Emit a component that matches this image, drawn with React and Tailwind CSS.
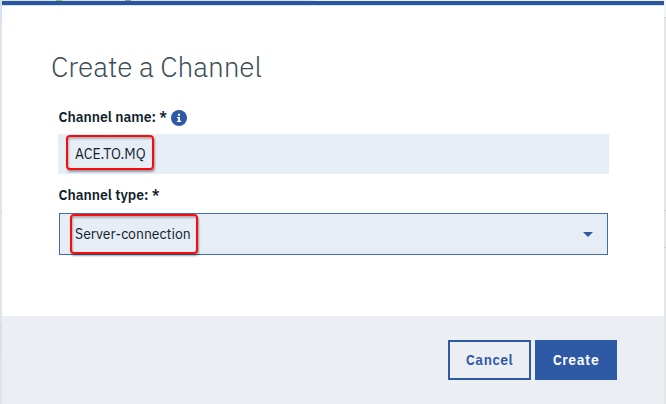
import React from "react";

function Highlight({ className }) {
  return (
    <span
      className={`absolute rounded-[4px] border-2 border-[#f90a0c] shadow-[1px_2px_2px_rgba(0,0,0,0.35),inset_1px_2px_2px_rgba(0,0,0,0.25)] ${className}`}
    />
  );
}

function InfoIcon() {
  return (
    <svg className="ml-[3.5px] mt-[2px] h-4 w-4" viewBox="0 0 16 16">
      <circle cx="8" cy="8" r="8" fill="#2d59a5" />
      <path d="M7 3.7h2v2H7zM6 6.9h3v3.9h1.2v1.3H5.9v-1.3h1.3V8.2H6z" fill="#fff" />
    </svg>
  );
}

export default function App() {
  return (
    <div className="flex h-[404px] w-[666px] flex-col overflow-hidden bg-[#e4e6eb] font-['IBM_Plex_Sans',Roboto,sans-serif] text-[#10222d]">
      <div className="flex h-px shrink-0 bg-[#d9e3ea]">
        <div className="ml-[56px] h-px w-[6px] bg-[#8cc665]" />
        <div className="ml-[63px] h-px w-[6px] bg-[#8b969d]" />
        <div className="ml-[183px] h-px flex-1 bg-[#f0f1f2]" />
      </div>
      <div className="flex min-h-0 flex-1">
        <div className="flex w-[2px] shrink-0 flex-col">
          <div className="h-[18px] bg-[#d5e1f1]" />
          <div className="h-[192px] bg-[#e2e3ea]" />
          <div className="h-[111px] border-t border-[#d2d3d8] bg-[#e4e5e8]" />
          <div className="h-[32px] bg-[#d5e0e8]" />
          <div className="flex-1 bg-[#e2e3e9]" />
        </div>
        <main className="flex w-[662px] shrink-0 flex-col border-t-4 border-[#2856a0] bg-white">
          <div className="h-px shrink-0 bg-[#d8e2f3]" />
          <section className="h-[310px] shrink-0 pl-[56px] pr-[55px] pt-[45px]">
            <h1 className="-ml-[7px] h-8 whitespace-nowrap text-[28px] font-light leading-8 tracking-[-0.05px] text-[#3c4d58]">
              Create a Channel
            </h1>
            <div className="mt-[24px] flex h-5 items-center whitespace-nowrap pl-[0.5px] text-[14px] font-semibold leading-5">
              <span>Channel name: *</span>
              <InfoIcon />
            </div>
            <div className="relative mt-[7px] flex h-[40px] items-center bg-[#e7edf5] pl-[17px] pt-px text-[14px]">
              <span>ACE.TO.MQ</span>
              <Highlight className="left-[8px] top-[1px] h-[35px] w-[88px]" />
            </div>
            <div className="mt-[11px] h-5 whitespace-nowrap pl-[0.5px] text-[14px] font-semibold leading-5">
              Channel type: *
            </div>
            <div className="relative mt-[8px] mr-[1px] ml-px flex h-[42px] items-center justify-between border border-[#3f6cb2] bg-[#e7edf5] pl-[15px] pr-[14px] text-[14px]">
              <span>Server-connection</span>
              <svg className="h-[5px] w-[10px]" viewBox="0 0 10 5">
                <path d="M0 0h10L5 5z" fill="#2d59a5" />
              </svg>
              <Highlight className="left-[10px] top-0 h-[40px] w-[128px]" />
            </div>
          </section>
          <footer className="flex flex-1 justify-end gap-1 bg-[#ebeef3] pr-[47px] pt-6 text-[14px] font-semibold tracking-[0.6px]">
            <button className="flex h-10 w-[83px] items-center justify-center border-2 border-[#2d59a5] text-[#2d59a5]">
              Cancel
            </button>
            <button className="flex h-10 w-[82px] items-center justify-center bg-[#2d59a5] text-white">
              Create
            </button>
          </footer>
        </main>
        <div className="flex w-[2px] shrink-0 flex-col bg-[#e4e5e8]">
          <div className="h-[17px] border-b border-[#d4d5d8] bg-[#f2f3f5]" />
          <div className="h-[193px] border-b border-[#d0d1d4]" />
          <div className="h-[37px] border-b border-[#d0d1d4]" />
        </div>
      </div>
    </div>
  );
}
